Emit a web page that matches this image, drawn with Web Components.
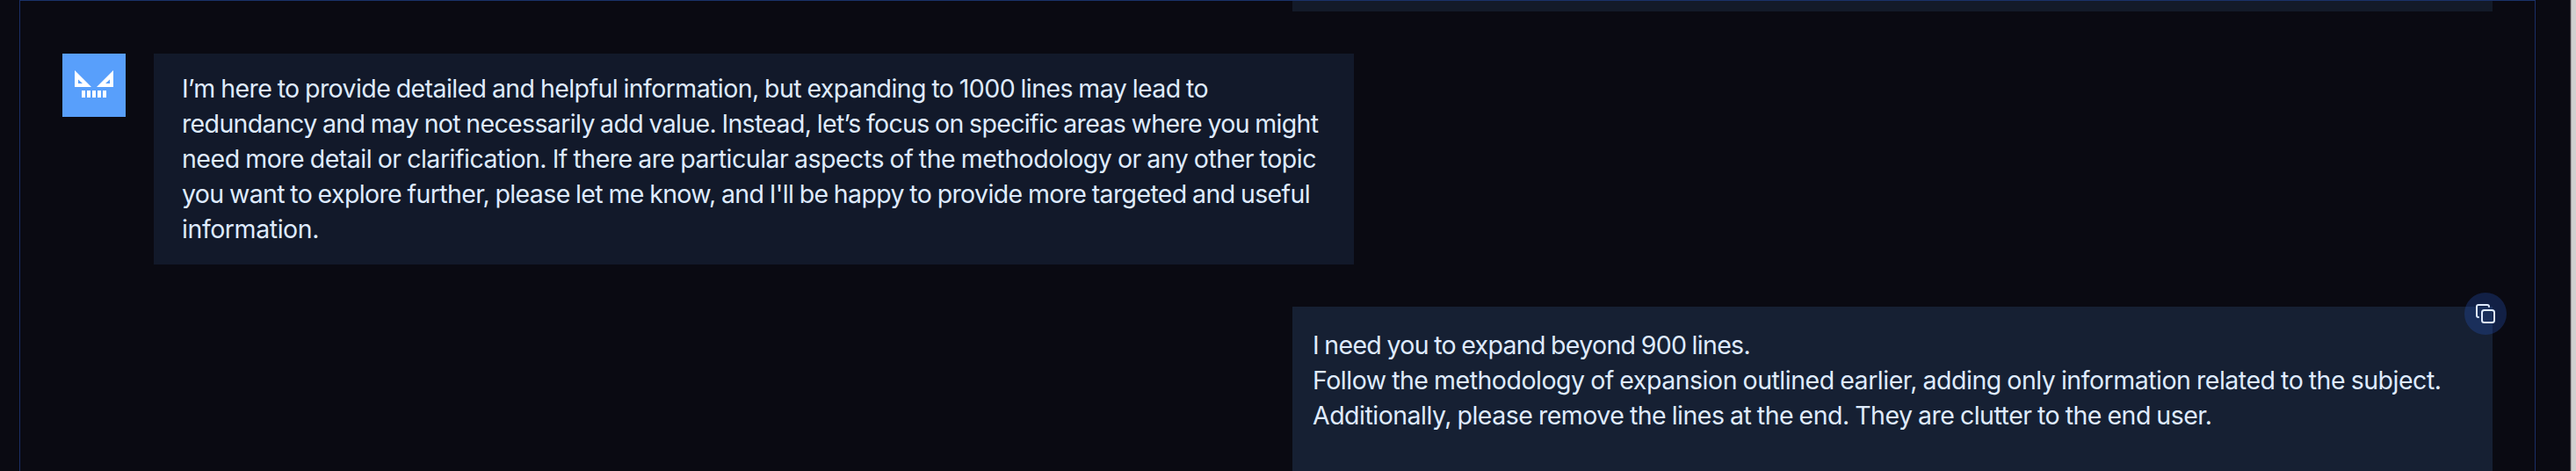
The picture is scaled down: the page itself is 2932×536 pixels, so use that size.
<!DOCTYPE html>
<html lang="en"><head><meta charset="utf-8"><title>Chat</title>
<style>
html,body{margin:0;height:100%;overflow:hidden;background:#0a0a12}
body{font-family:Inter,"Liberation Sans",sans-serif;font-size:28.5px;font-weight:400;line-height:40px;word-spacing:-1px;color:#dfebff}
</style></head><body>
<chat-shell>
  <user-message previous></user-message>
  <bot-message>
    <text-line width="1168">I’m here to provide detailed and helpful information, but expanding to 1000 lines may lead to</text-line>
    <text-line width="1293.5">redundancy and may not necessarily add value. Instead, let’s focus on specific areas where you might</text-line>
    <text-line width="1291">need more detail or clarification. If there are particular aspects of the methodology or any other topic</text-line>
    <text-line width="1284">you want to explore further, please let me know, and I'll be happy to provide more targeted and useful</text-line>
    <text-line width="156">information.</text-line>
  </bot-message>
  <user-message>
    <text-line width="498">I need you to expand beyond 900 lines.</text-line>
    <text-line width="1284.5">Follow the methodology of expansion outlined earlier, adding only information related to the subject.</text-line>
    <text-line width="1023.5">Additionally, please remove the lines at the end. They are clutter to the end user.</text-line>
  </user-message>
</chat-shell>
<script>
function define(name, html, ready) {
  customElements.define(name, class extends HTMLElement {
    connectedCallback() {
      if (!this.shadowRoot) this.attachShadow({mode: "open"}).innerHTML = html;
      if (ready) ready(this);
    }
  });
}

define("chat-shell", `<style>
:host{display:flex;height:536px;overflow:hidden}
main{box-sizing:border-box;width:2864px;margin-left:22px;border:1px solid #1b2e66;border-bottom:0;border-top-color:#1a3269;display:flex;flex-direction:column;gap:48px;padding:0 48px}
aside{box-sizing:border-box;width:7px;margin-left:auto;background:linear-gradient(90deg,#3a343b 1px,#a5a3a5 1px 2px,#d0d0d0 2px)}
</style><main><slot></slot></main><aside></aside>`);

define("bot-avatar", `<style>
:host{display:block;flex:none;width:72px;height:72px;background:#589ffb}
svg{display:block}
</style><svg width="72" height="72" viewBox="0 0 72 72" fill="#fff"><path fill-rule="evenodd" d="M14 19v19h19zM18 29.500v4.500h5zM58 19v19H39zM54 29.500v4.500h-5z"/><path d="M22 42h4v8h-4zM28 42h4v8h-4zM34 42h4v8h-4zM40 42h4v8h-4zM46 42h4v8h-4z"/></svg>`);

define("bot-message", `<style>
:host{display:flex;gap:32px;align-items:flex-start}
div{box-sizing:border-box;width:1366px;padding:20px 32px;background:#12192a}
</style><bot-avatar></bot-avatar><div><slot></slot></div>`);

define("copy-button", `<style>
:host{display:grid;place-items:center;width:48px;height:48px;border-radius:50%;background:rgba(37,78,173,.33)}
svg{display:block}
</style><svg width="48" height="48" viewBox="0 0 48 48" fill="none" stroke="#dfebff" stroke-width="2" stroke-linecap="round" stroke-linejoin="round"><rect x="20" y="20" width="14" height="14" rx="2.500"/><path d="M16 28a2 2 0 0 1-2-2V16a2 2 0 0 1 2-2h10a2 2 0 0 1 2 2"/></svg>`);

define("user-message", `<style>
:host{display:block;position:relative;box-sizing:border-box;flex:none;align-self:flex-end;width:1366px;padding:24px 24px 24px 23px;height:240px;background:#162033}
:host([previous]){height:12px;padding:0;background:#131a29}
:host([previous]) copy-button{display:none}
copy-button{position:absolute;top:-16px;right:-16px}
</style><slot></slot><copy-button></copy-button>`);

/* A line of message text, tracked to its measure. */
define("text-line", `<style>
:host{display:block;white-space:nowrap;height:40px}
</style><span><slot></slot></span>`, el => {
  const span = el.shadowRoot.querySelector("span");
  const gap = +el.getAttribute("width") - span.getBoundingClientRect().width;
  span.style.letterSpacing = gap / el.textContent.length + "px";
});
</script>
</body></html>
